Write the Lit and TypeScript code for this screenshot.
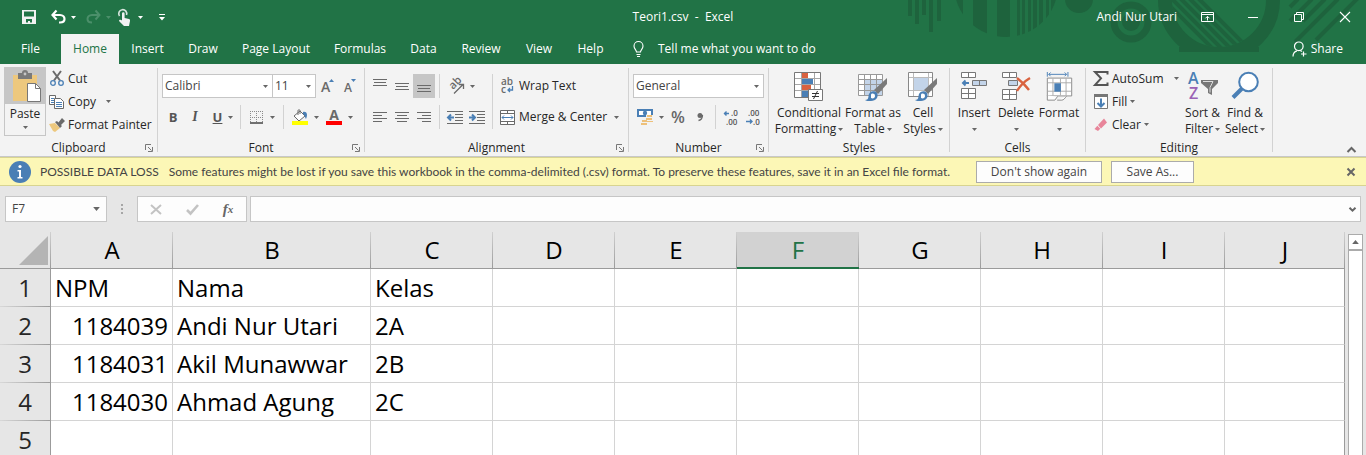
import { LitElement, html, css, svg } from "lit";
import { customElement, state } from "lit/decorators.js";
import { classMap } from "lit/directives/class-map.js";

const icon = (w: number, h: number, body: unknown) =>
  html`<svg class="ic" width=${w} height=${h} viewBox="0 0 ${w} ${h}" aria-hidden="true">${body}</svg>`;

const caret = html`<svg class="ic caret" width="5" height="3" viewBox="0 0 5 3" aria-hidden="true"><path d="M0 0h5L2.500 3z" fill="currentColor" /></svg>`;

const lines = (rows: number[][]) =>
  svg`${rows.map(([x, y, len]) => svg`<rect x=${x} y=${y} width=${len} height="1" fill="#6a6a6a" />`)}`;

const gridPaper = svg`<path d="M.5 .5h26v25h-26z" fill="#fff" stroke="#777"/><path d="M7.500 1v24M20.500 1v24M1 6.500h25M1 12.500h25M1 18.500h25" stroke="#a6a6a6" fill="none"/>`;

const brush = svg`<path d="M29 6v6l-9 10-4-4z" fill="#7a7a7a"/><path d="M7 28c4 0 3-3 4-6 1-3 6-4 8-1 2 4-1 8-6 8-3 0-5 0-6-1z" fill="#4a7fb5"/><path d="M13 23c0-2 4-2 4 1 0 2-2 3-4 2z" fill="#fff"/>`;

const I = {
  save: icon(14, 14, svg`<path d="M0 0h14v14H0z" fill="#f2f2f2"/><path d="M2 1.500h10v5H2zM4 9h6v3.500H8V11H6v1.500H4z" fill="#217346"/>`),
  undo: icon(15, 14, svg`<path d="M1 5h8c3 0 4.500 2 4.500 4S12 12.500 9 12.500H8M5.500 .500L1.500 5l4 4.500" fill="none" stroke="#fff" stroke-width="2.200"/>`),
  redo: icon(15, 14, svg`<path d="M14 5H6C3 5 1.500 7 1.500 9S3 12.500 6 12.500M9.500 .500l4 4.500-4 4.500" fill="none" stroke="#4b8f6a" stroke-width="2"/>`),
  touch: icon(13, 17, svg`<path d="M1.500 7A4 4 0 1 1 8.500 6" fill="none" stroke="#d9e6df" stroke-width="1.600"/><path d="M4 4.500a1.300 1.300 0 0 1 2.600 0V9l4.400 1c1 .300 1 1 1 2l-1 5H6L1 12c0-1.500 2-1.500 3-.500z" fill="#f2f2f2"/>`),
  customize: icon(6, 7, svg`<path d="M0 0h6v1H0zM0 3h6L3 6.500z" fill="#fff"/>`),
  display: icon(13, 10, svg`<path d="M.5 .5h12v9H.5zM.5 2.500h12M6.500 8.500v-4M4.500 6.300l2-2 2 2" fill="none" stroke="#fff"/>`),
  min: icon(10, 10, svg`<path d="M0 5.500h10" stroke="#fff"/>`),
  restore: icon(10, 10, svg`<path d="M.5 2.500h7v7h-7zM2.500 2.500v-2h7v7h-2" fill="none" stroke="#fff"/>`),
  close: icon(10, 10, svg`<path d="M0 0l10 10M10 0L0 10" stroke="#fff" stroke-width="1.100"/>`),
  bulb: icon(11, 16, svg`<path d="M3.500 11c0-2-2.500-3-2.500-6a4.500 4.500 0 0 1 9 0c0 3-2.500 4-2.500 6zM3.500 13.500h4M4 15.500h3" fill="none" stroke="#fff" stroke-width="1.100"/>`),
  share: icon(15, 16, svg`<path d="M1 15.500c0-3 1.500-5 4-5.700M10 10.500c-.500-.400-1-.600-1.800-.800M11.500 10.500v5M9 13h5.500" fill="none" stroke="#fff" stroke-width="1.200"/><circle cx="6.800" cy="5.300" r="4.300" fill="none" stroke="#fff" stroke-width="1.200"/>`),
  paste: icon(30, 32, svg`<path d="M1 4h24v26H1z" fill="#edc87e"/><path d="M6 2h4a3 3 0 0 1 6 0h4v6H6z" fill="#7a7a7a"/><circle cx="13" cy="3" r="1.400" fill="#c6c6c6"/><path d="M15.500 12.500h8l5 5v13h-13z" fill="#fff" stroke="#777"/><path d="M23.500 12.500v5h5" fill="none" stroke="#777"/>`),
  cut: icon(14, 15, svg`<path d="M3 0l7 9.500M11 0L4 9.500" stroke="#6a6a6a" stroke-width="2"/><circle cx="3" cy="12" r="2.300" fill="none" stroke="#4a7fb5" stroke-width="1.300"/><circle cx="11" cy="12" r="2.300" fill="none" stroke="#4a7fb5" stroke-width="1.300"/>`),
  copy: icon(16, 14, svg`<path d="M.5 .5h6v9h-6z" fill="#fff" stroke="#6a6a6a"/><path d="M2 3.500h3M2 5.500h3M2 7.500h3" stroke="#4a7fb5"/><path d="M5.500 3.500h6l3 3v7h-9z" fill="#fff" stroke="#6a6a6a"/><path d="M7 7.500h6M7 9.500h6M7 11.500h6" stroke="#4a7fb5"/>`),
  painter: icon(16, 14, svg`<path d="M0 6l6-1 5 5-5 4-2-1z" fill="#edc87e"/><path d="M6 4l2-1 5 5-2 2zM9 5l4-5 3 3-4 4z" fill="#6a6a6a"/>`),
  border: icon(13, 13, svg`<path d="M0 .5h13M0 6.500h13M.5 0v12M6.500 0v12M12.500 0v12" stroke="#8a8a8a" stroke-dasharray="1 1"/><path d="M0 12h13" stroke="#444" stroke-width="1.500"/>`),
  fill: icon(16, 16, svg`<path d="M2 7l6-5 5 5-6 5z" fill="#fff" stroke="#6a6a6a"/><path d="M6 6V1.500c0-1 2-1 2 0V5" fill="none" stroke="#6a6a6a"/><path d="M11 3c4-1 5 3 3 7-1-1-1-4-3-5z" fill="#4a7fb5"/><path d="M0 12h16v4H0z" fill="#ff0"/>`),
  fontColor: icon(16, 16, svg`<text x="8" y="11" text-anchor="middle" font-size="14" font-weight="700" fill="#6a6a6a">A</text><path d="M0 12h16v4H0z" fill="#f00"/>`),
  grow: icon(13, 15, svg`<text x="0" y="13" font-size="14" font-weight="600" fill="#6a6a6a">A</text><path d="M8 3h5l-2.500-3z" fill="#4a7fb5"/>`),
  shrink: icon(13, 15, svg`<text x="1" y="13" font-size="12" font-weight="600" fill="#6a6a6a">A</text><path d="M8 0h5l-2.500 3z" fill="#4a7fb5"/>`),
  top: icon(14, 14, lines([[0, 0, 14], [1, 3, 12], [0, 6, 14]])),
  middle: icon(14, 14, lines([[0, 4, 14], [1, 7, 12], [0, 10, 14]])),
  bottom: icon(14, 14, lines([[0, 6, 14], [1, 9, 12], [0, 12, 14]])),
  left: icon(14, 11, lines([[0, 0, 14], [0, 3, 9], [0, 6, 14], [0, 9, 9]])),
  center: icon(14, 11, lines([[0, 0, 14], [2, 3, 10], [0, 6, 14], [2, 9, 10]])),
  right: icon(14, 11, lines([[0, 0, 14], [5, 3, 9], [0, 6, 14], [5, 9, 9]])),
  orient: icon(16, 16, svg`<text transform="translate(5 12) rotate(-45)" font-size="11" font-weight="600" fill="#6a6a6a">ab</text><path d="M6 15.500l9-9M15.500 11V6.500H11" fill="none" stroke="#6a6a6a" stroke-width="1.300"/>`),
  outdent: icon(16, 13, svg`${lines([[0, 0, 16], [8, 3, 8], [8, 6, 8], [8, 9, 8], [0, 12, 16]])}<path d="M1 6.500h6M4 3.500l-3 3 3 3" fill="none" stroke="#4a7fb5" stroke-width="2"/>`),
  indent: icon(16, 13, svg`${lines([[0, 0, 16], [8, 3, 8], [8, 6, 8], [8, 9, 8], [0, 12, 16]])}<path d="M0 6.500h6M3 3.500l3 3-3 3" fill="none" stroke="#4a7fb5" stroke-width="2"/>`),
  wrap: icon(15, 16, svg`<text x="1" y="7" font-size="10" font-weight="600" fill="#6a6a6a">ab</text><text x="1" y="15" font-size="10" font-weight="600" fill="#6a6a6a">c</text><path d="M12.500 8v4H8M10 10l-2 2 2 2" fill="none" stroke="#4a7fb5" stroke-width="1.300"/>`),
  merge: icon(15, 15, svg`<path d="M.5 .5h14v14H.5zM.5 3.500h14M.5 11.500h14M7.500 .5v3M7.500 11.500v3" fill="#fff" stroke="#6a6a6a"/><path d="M2 7.500h11M4 5.500l-2 2 2 2M11 5.500l2 2-2 2" fill="none" stroke="#4a7fb5"/>`),
  money: icon(16, 16, svg`<path d="M0 0h16v8H0z" fill="#4a7fb5"/><path d="M2 2h12v4H2z" fill="#fff"/><circle cx="8" cy="4" r="2.200" fill="#4a7fb5"/><path d="M9 6h7v9H4V9h5z" fill="#f2f2f2"/><path d="M10 6h5v2h-5zM9 9h6v2H9zM10 12h6v1h-6zM5 11h5v2H5zM4 14h6v2H4z" fill="#edc07a"/>`),
  comma: icon(6, 8, svg`<circle cx="3" cy="2.500" r="2.500" fill="#6a6a6a"/><path d="M5.500 2c0 3-1.500 5-4 5.500" fill="none" stroke="#6a6a6a" stroke-width="1.300"/>`),
  incDec: icon(15, 15, svg`<text x="7" y="6" font-size="8" font-weight="600" fill="#555">.0</text><text x="2" y="15" font-size="8" font-weight="600" fill="#555">.00</text><path d="M0 3.500h5M2.500 1.500l-2 2 2 2" fill="none" stroke="#4a7fb5" stroke-width="1.400"/>`),
  decDec: icon(15, 15, svg`<text x="2" y="6" font-size="8" font-weight="600" fill="#555">.00</text><text x="7" y="15" font-size="8" font-weight="600" fill="#555">.0</text><path d="M0 11.500h6M4 9.500l2 2-2 2" fill="none" stroke="#4a7fb5" stroke-width="1.400"/>`),
  conditional: icon(30, 30, svg`${gridPaper}<path d="M8 1h6v5H8zM8 13h9v5H8z" fill="#d9623f"/><path d="M8 7h11v5H8zM8 19h6v6H8z" fill="#4a7fb5"/><path d="M14.500 17.500h14v11h-14z" fill="#fff" stroke="#777"/><path d="M18 21.500h7M18 24.500h7M23.500 19l-4 8" stroke="#333" fill="none"/>`),
  formatTable: icon(30, 30, svg`<path d="M.5 2.500h24v21H.5z" fill="#fff"/><path d="M6 8h18v15H6z" fill="#c3d4e9"/><path d="M.5 2.500h24v21H.5zM6.500 3v20M12.500 3v20M18.500 3v20M1 7.500h23M1 12.500h23M1 18.500h23" fill="none" stroke="#999"/>${brush}`),
  cellStyles: icon(30, 30, svg`<path d="M.5 .5h24v24H.5z" fill="#fff" stroke="#888"/><path d="M5.500 1v23M20.500 1v23M1 5.500h23M1 18.500h23" stroke="#bbb"/><path d="M6 6h14v12H6z" fill="#c3d4e9"/>${brush}`),
  insert: icon(28, 30, svg`<path d="M1.500 .5h14v5h-14zM8.500 .5v5M1.500 16.500h14v10h-14zM8.500 16.500v10M1.500 21.500h14" fill="#fff" stroke="#777"/><path d="M12.500 8.500h14v5h-14zM19.500 8.500v5" fill="#c3d4e9" stroke="#777"/><path d="M3 11h6M5.500 8.500L3 11l2.500 2.500" fill="none" stroke="#4a7fb5" stroke-width="2"/>`),
  del: icon(30, 30, svg`<path d="M1.500 .5h14v5h-14zM8.500 .5v5M1.500 17.500h14v10h-14zM8.500 17.500v10M1.500 22.500h14" fill="#fff" stroke="#777"/><path d="M7.500 8.500h9v5h-9z" fill="#c3d4e9" stroke="#777"/><path d="M16 6c4 3 9 8 12 12M29 6c-5 3-10 8-13 13" fill="none" stroke="#d9623f" stroke-width="2.400"/>`),
  format: icon(29, 32, svg`<path d="M1.500 0v5M23.500 0v5M3 2.500h19M5 .500l-2 2 2 2M20 .500l2 2-2 2" fill="none" stroke="#4a7fb5"/><path d="M1.500 6.500h26v19h-26z" fill="#fff" stroke="#888"/><path d="M7.500 7v18M15.500 7v18M21.500 7v18M2 11.500h25M2 20.500h25" stroke="#aaa"/><path d="M9 12h7v9H9z" fill="#4a7fb5"/><path d="M1.500 25v5h8l3-4M12 30h5c2 0 3-2 5-4" fill="#fff" stroke="#888"/>`),
  sum: icon(15, 15, svg`<path d="M14 3.500V1H1.500l6 6.300L1.500 14H14v-2.500" fill="none" stroke="#555" stroke-width="2"/>`),
  fillDown: icon(14, 15, svg`<path d="M.5 .5h13v14H.5z" fill="#fff" stroke="#777"/><path d="M0 0h14v3H0z" fill="#777"/><path d="M7 4.500v8M3.500 9L7 12.500 10.500 9" fill="none" stroke="#4a7fb5" stroke-width="2"/>`),
  clear: icon(14, 14, svg`<path d="M4 7l6-6.500 3 4-6 6z" fill="#e8859a"/><path d="M3.300 7.700l3 3L4 13l-3.500-2z" fill="#e8859a"/>`),
  sort: icon(30, 30, svg`<text x="0" y="12" font-size="16" font-weight="600" fill="#4a7fb5">A</text><text x="1" y="27" font-size="16" font-weight="600" fill="#9a62b5">Z</text><path d="M13 8h17v3l-6 6v6l-4-2v-4l-7-6z" fill="#777"/><path d="M15 9.500h10l-3 6v5" fill="none" stroke="#ddd"/>`),
  find: icon(28, 30, svg`<circle cx="17.500" cy="10" r="9.300" fill="#fff" stroke="#4a7fb5" stroke-width="2"/><path d="M11 16.500L2 25.500" stroke="#4a7fb5" stroke-width="4"/>`),
  launcher: icon(8, 8, svg`<path d="M.5 6V.5H6M3 3l3.500 3.500M7.500 3v4.500H3" fill="none" stroke="#777"/>`),
  collapse: icon(9, 6, svg`<path d="M.5 5l4-4 4 4" fill="none" stroke="#666" stroke-width="2"/>`),
  info: icon(22, 22, svg`<circle cx="11" cy="11" r="11" fill="#4a7fb5"/><circle cx="11" cy="5.500" r="1.600" fill="#fff"/><path d="M8.500 9H12v7h1.500v1.500h-5V16H10v-5.500H8.500z" fill="#fff"/>`),
  dismiss: icon(8, 8, svg`<path d="M.5 .5l7 7M7.500 .5l-7 7" stroke="#666" stroke-width="2"/>`),
  cancel: icon(12, 11, svg`<path d="M1 1l10 9M11 1L1 10" stroke="#c3c3c3" stroke-width="2"/>`),
  enter: icon(13, 11, svg`<path d="M1 6l3.500 3.500L12 1" fill="none" stroke="#c3c3c3" stroke-width="2.600"/>`),
  chevron: icon(7, 5, svg`<path d="M.5 .7l3 3 3-3" fill="none" stroke="#666" stroke-width="2"/>`),
};

const TABS: [string, number][] = [
  ["File", 61], ["Home", 58], ["Insert", 57], ["Draw", 54], ["Page Layout", 92],
  ["Formulas", 76], ["Data", 51], ["Review", 64], ["View", 52], ["Help", 51],
];
const COLUMNS = ["A", "B", "C", "D", "E", "F", "G", "H", "I", "J"];
const ROWS = [
  ["NPM", "Nama", "Kelas"],
  ["1184039", "Andi Nur Utari", "2A"],
  ["1184031", "Akil Munawwar", "2B"],
  ["1184030", "Ahmad Agung", "2C"],
  [],
];

@customElement("app-root")
export class AppRoot extends LitElement {
  @state() private tab = "Home";

  static styles = css`
    :host { display: flex; flex-direction: column; height: 100vh; overflow: hidden; background: #e6e6e6; font: 12px/16px "Open Sans", "Noto Sans", sans-serif; color: #262626; }
    *, *::before, *::after { box-sizing: border-box; }
    button, input, select { font: inherit; color: inherit; margin: 0; padding: 0; border: 0; background: none; border-radius: 0; outline: none; appearance: none; }
    button { display: flex; align-items: center; justify-content: center; white-space: nowrap; }
    .ic { display: block; flex: none; overflow: visible; }
    .caret { color: #666; }
    .top { position: relative; flex: none; background: #217346; color: #fff; }
    .art { position: absolute; top: 0; right: 0; }
    .title { position: relative; display: grid; grid-template-columns: 1fr auto 1fr; height: 34px; align-items: center; }
    .quick { display: flex; align-items: center; padding-left: 22px; }
    .quick .caret { color: #fff; }
    .quick .off .caret { color: #4b8f6a; }
    .pair { gap: 5px; }
    .q1 { margin-left: 15px; }
    .q2 { margin-left: 10px; }
    .q3 { margin-left: 7px; gap: 7px; }
    .q4 { margin-left: 16px; }
    .account { display: flex; justify-content: flex-end; align-items: center; padding-right: 16px; }
    .window { width: 46px; height: 30px; }
    .window:last-child { width: 28px; justify-content: flex-end; }
    .name { margin-right: 7px; }
    .tabs { position: relative; display: flex; height: 30px; }
    .tab { height: 30px; flex: none; }
    .tab.on { background: #f3f3f3; color: #217346; }
    .tell { gap: 14px; margin-left: 17px; }
    .share { gap: 4px; margin-left: auto; padding-right: 23px; }
    .ribbon { flex: none; display: grid; grid-template-columns: 158px 207px 264px 140px 181px 136px 187px 1fr; height: 93px; background: #f3f3f3; border-bottom: 1px solid #c8c8c8; }
    .group { display: grid; grid-template-rows: 72px 17px; padding-top: 3px; background: linear-gradient(#d2d2d2, #d2d2d2) right 4px / 1px 84px no-repeat; }
    .last { background: none; align-items: end; justify-items: end; padding: 0 10px 1px 0; }
    .foot { display: grid; grid-template-columns: 16px 1fr 16px; align-items: center; padding-right: 1px; text-align: center; }
    .foot span { grid-column: 2; }
    .foot button { height: 12px; }
    .body { display: flex; }
    .stack { display: grid; grid-template-rows: 23px 23px 23px; justify-items: start; align-content: start; }
    .line { gap: 3px; height: 23px; }
    .line .ic:first-child { width: 16px; }
    .far .caret { margin-left: 7px; }
    .clip { padding-left: 4px; gap: 3px; }
    .paste { flex-direction: column; justify-content: flex-start; width: 42px; height: 69px; border: 1px solid #c6c6c6; background: linear-gradient(#c6c6c6, #c6c6c6) top / 100% 36px no-repeat; }
    .paste .ic { margin: 3px 0 0 4px; }
    .paste .word { margin-top: 3px; }
    .paste .caret { margin: 4px 0 0; }
    .two { display: grid; grid-template-rows: 24px 24px; row-gap: 7px; align-content: start; padding: 7px 0 0 4px; }
    .row { display: flex; align-items: center; }
    .pick { display: grid; align-items: center; height: 24px; border: 1px solid #c6c6c6; background: #fff; }
    .pick > * { grid-area: 1 / 1; }
    .pick select { padding-left: 2px; width: 100%; color: #444; }
    .pick .caret { justify-self: end; margin-right: 4px; pointer-events: none; }
    .w-font { width: 111px; }
    .w-size { width: 44px; margin-left: -1px; }
    .w-number { width: 131px; }
    .b22 { width: 22px; height: 24px; flex: none; }
    .b34 { width: 34px; height: 24px; flex: none; gap: 6px; }
    .b42 { width: 42px; height: 24px; flex: none; gap: 7px; }
    .on22 { background: #c6c6c6; }
    .rule { width: 1px; height: 24px; background: #d2d2d2; flex: none; }
    .air { margin: 0 4px; }
    .after { margin-right: 4px; }
    .bold { font-weight: 700; font-size: 13px; color: #555; }
    .ital { font: italic 700 14px/16px "Liberation Serif", serif; color: #555; }
    .under { font-weight: 700; font-size: 13px; color: #555; text-decoration: underline; }
    .align { display: grid; grid-template-columns: 127px 1fr; }
    .wide { border-left: 1px solid #d2d2d2; display: grid; grid-template-rows: 24px 24px; row-gap: 7px; margin-top: 7px; padding-left: 7px; justify-items: start; height: 55px; }
    .merge { gap: 4px; height: 24px; }
    .pct { font-size: 16px; font-weight: 600; color: #666; }
    .big { display: flex; flex-direction: column; justify-content: flex-start; line-height: 16px; padding-top: 5px; }
    .big .ic { height: 30px; }
    .big .word { margin-top: 3px; }
    .big .sub { display: flex; align-items: center; justify-content: center; gap: 2px; height: 16px; }
    .big .caret, .paste .caret { height: 3px; }
    .styles { display: grid; grid-template-columns: 72px 56px 44px; padding-left: 4px; }
    .cells { display: grid; grid-template-columns: 42px 42px 44px; padding-left: 3px; }
    .edit { display: grid; grid-template-columns: 88px 43px 42px; padding-left: 7px; }
    .notice { flex: none; display: flex; align-items: center; height: 29px; padding: 0 11px 0 9px; background: #fcf7b6; border: solid #d8d490; border-width: 1px 0; color: #444; white-space: nowrap; font-family: Lato, sans-serif; }
    .notice b { font-weight: 400; margin: 0 10px 0 9px; }
    .notice .act { height: 22px; border: 1px solid #ababab; background: #fdfdfd; font-family: "Open Sans", sans-serif; }
    .act1 { width: 126px; margin-left: auto; }
    .act2 { width: 83px; margin: 0 153px 0 9px; }
    .formula { flex: none; display: flex; align-items: center; height: 46px; padding: 0 5px; }
    .field { height: 26px; border: 1px solid #c6c6c6; background: #fdfdfd; display: flex; align-items: center; }
    .ref { width: 102px; padding: 0 6px; }
    .ref input { flex: 1; min-width: 0; color: #444; }
    .ref .caret { width: 7px; height: 4px; }
    .dots { width: 30px; display: grid; justify-content: center; }
    .acts { width: 110px; }
    .acts button { flex: 1; }
    .fx { font: italic 700 15px/20px "Liberation Serif", serif; color: #666; }
    .fx small { font-size: 11px; }
    .entry { flex: 1; margin-left: 3px; padding-right: 4px; }
    .entry input { flex: 1; min-width: 0; }
    .sheet { flex: 1; min-height: 0; display: grid; grid-template-columns: 1fr 21px; overflow: hidden; }
    table { width: 100%; table-layout: fixed; border-collapse: separate; border-spacing: 0; background: #fff; font-size: 24px; line-height: 32px; color: #000; align-self: start; }
    .c0 { width: 51px; }
    .c1 { width: 122px; }
    .c2 { width: 198px; }
    th { font-weight: 400; padding: 0; background: #e6e6e6; }
    thead th { height: 37px; border-bottom: 1px solid #9b9b9b; background: linear-gradient(#d0d0d0, #9b9b9b) right / 1px 100% no-repeat #e6e6e6; }
    thead .hot { background-color: #d2d2d2; color: #217346; border-bottom: 2px solid #217346; }
    thead th:first-child svg { margin: 0 3px 0 auto; }
    tbody th { height: 38px; border-right: 1px solid #9b9b9b; background: linear-gradient(90deg, #d8d8d8, #9b9b9b) bottom / 100% 1px no-repeat #e6e6e6; color: #262626; }
    td { height: 38px; padding: 0 4px; border: solid #d4d4d4; border-width: 0 1px 1px 0; white-space: nowrap; }
    td:last-child { border-right-color: #9b9b9b; }
    .num { text-align: right; }
    .scroll { display: flex; flex-direction: column; padding: 2px 3px 0; }
    .scroll button { height: 16px; border: 1px solid #ababab; background: #fff; }
    .scroll .caret { transform: rotate(180deg); width: 7px; height: 4px; }
    .thumb { flex: 1; border: 1px solid #ababab; border-bottom: 0; background: #fff; }
  `;

  private foot(label: string, launcher = false) {
    return html`<div class="foot"><span>${label}</span>${launcher ? html`<button aria-label="${label} settings">${I.launcher}</button>` : ""}</div>`;
  }

  private big(pic: unknown, first: string, second = "") {
    return html`<button class="big">${pic}<span class="word">${first}</span><span class="sub">${second}${caret}</span></button>`;
  }

  private art() {
    const c = "#1e633d";
    return html`<svg class="art" width="466" height="64" viewBox="900 0 466 64" aria-hidden="true">
      <defs>
        <clipPath id="disc"><circle cx="1006" cy="-15" r="52" /></clipPath>
        <clipPath id="hole"><circle cx="1219" cy="0" r="47" /></clipPath>
        <clipPath id="band"><path d="M1150 0h140v52h-140z" /></clipPath>
      </defs>
      <path fill=${c} d="M908 0h4v16h-4zM915 0h4v24h-4zM922 0h4v15h-4zM929 0h4v32h-4zM937 0h4v21h-4z" />
      <path clip-path="url(#disc)" fill=${c} d="M950 0h13v20h-13zM973 0h14v40h-14zM997 0h13v40h-13zM1017 0h3v40h-3zM1022 0h3v40h-3zM1028 0h3v40h-3zM1033 0h4v40h-4zM1039 0h4v40h-4zM1046 0h3v40h-3zM1051 0h8v40h-8z" />
      <circle cx="1079" cy="-1" r="14" fill=${c} />
      <circle cx="1131" cy="22" r="17" fill="none" stroke=${c} stroke-width="7" />
      <circle cx="1131" cy="22" r="9" fill=${c} />
      <circle cx="1219" cy="0" r="54" fill="none" stroke=${c} stroke-width="14" clip-path="url(#band)" />
      <path d="M1179 47h80v5h-80z" fill=${c} />
      <path clip-path="url(#hole)" stroke=${c} stroke-width="4" fill="none" d="M1160 -4l60 60M1169 -4l60 60M1178 -4l60 60M1187 -4l60 60M1196 -4l60 60" />
      <path stroke=${c} stroke-width="4" fill="none" d="M1290 7l8-8M1290 21l22-22M1303 21l22-22M1295 42l43-43M1316 40l42-42" />
    </svg>`;
  }

  render() {
    return html`
      <header class="top">
        ${this.art()}
        <div class="title">
          <div class="quick">
            <button aria-label="Save">${I.save}</button>
            <button class="pair q1" aria-label="Undo">${I.undo}${caret}</button>
            <button class="pair q2 off" aria-label="Redo" disabled>${I.redo}${caret}</button>
            <button class="pair q3" aria-label="Touch mode">${I.touch}${caret}</button>
            <button class="q4" aria-label="Customize toolbar">${I.customize}</button>
          </div>
          <div>Teori1.csv&nbsp; -&nbsp; Excel</div>
          <div class="account">
            <span class="name">Andi Nur Utari</span>
            <button class="window" aria-label="Ribbon display">${I.display}</button>
            <button class="window" aria-label="Minimize">${I.min}</button>
            <button class="window" aria-label="Restore">${I.restore}</button>
            <button class="window" aria-label="Close">${I.close}</button>
          </div>
        </div>
        <nav class="tabs">
          ${TABS.map(([name, width]) => html`<button class=${classMap({ tab: true, on: name === this.tab })} style="width:${width}px" @click=${() => (this.tab = name)}>${name}</button>`)}
          <button class="tell">${I.bulb}Tell me what you want to do</button>
          <button class="share">${I.share}Share</button>
        </nav>
      </header>

      <section class="ribbon">
        <div class="group">
          <div class="body clip">
            <button class="paste">${I.paste}<span class="word">Paste</span>${caret}</button>
            <div class="stack">
              <button class="line">${I.cut}Cut</button>
              <button class="line far">${I.copy}Copy${caret}</button>
              <button class="line">${I.painter}Format Painter</button>
            </div>
          </div>
          ${this.foot("Clipboard", true)}
        </div>
        <div class="group">
          <div class="two">
            <div class="row">
              <label class="pick w-font"><select aria-label="Font"><option>Calibri</option></select>${caret}</label>
              <label class="pick w-size"><select aria-label="Font size"><option>11</option></select>${caret}</label>
              <button class="b22" aria-label="Increase font size">${I.grow}</button>
              <button class="b22" aria-label="Decrease font size">${I.shrink}</button>
            </div>
            <div class="row">
              <button class="b22 bold">B</button>
              <button class="b22 ital">I</button>
              <button class="b34" aria-label="Underline"><span class="under">U</span>${caret}</button>
              <span class="rule"></span>
              <button class="b42" aria-label="Borders">${I.border}${caret}</button>
              <span class="rule after"></span>
              <button class="b34" aria-label="Fill colour">${I.fill}${caret}</button>
              <button class="b34" aria-label="Font colour">${I.fontColor}${caret}</button>
            </div>
          </div>
          ${this.foot("Font", true)}
        </div>
        <div class="group">
          <div class="align">
            <div class="two">
              <div class="row">
                <button class="b22" aria-label="Top align">${I.top}</button>
                <button class="b22" aria-label="Middle align">${I.middle}</button>
                <button class="b22 on22" aria-label="Bottom align">${I.bottom}</button>
                <span class="rule air"></span>
                <button class="b34" aria-label="Orientation">${I.orient}${caret}</button>
              </div>
              <div class="row">
                <button class="b22" aria-label="Align left">${I.left}</button>
                <button class="b22" aria-label="Center">${I.center}</button>
                <button class="b22" aria-label="Align right">${I.right}</button>
                <span class="rule air"></span>
                <button class="b22" aria-label="Decrease indent">${I.outdent}</button>
                <button class="b22" aria-label="Increase indent">${I.indent}</button>
              </div>
            </div>
            <div class="wide">
              <button class="merge">${I.wrap}Wrap Text</button>
              <button class="merge">${I.merge}Merge &amp; Center&nbsp;${caret}</button>
            </div>
          </div>
          ${this.foot("Alignment", true)}
        </div>
        <div class="group">
          <div class="two">
            <div class="row"><label class="pick w-number"><select aria-label="Number format"><option>General</option></select>${caret}</label></div>
            <div class="row">
              <button class="b34" aria-label="Accounting format">${I.money}${caret}</button>
              <button class="b22 pct">%</button>
              <button class="b22" aria-label="Comma style">${I.comma}</button>
              <span class="rule air"></span>
              <button class="b22" aria-label="Increase decimal">${I.incDec}</button>
              <button class="b22" aria-label="Decrease decimal">${I.decDec}</button>
            </div>
          </div>
          ${this.foot("Number", true)}
        </div>
        <div class="group">
          <div class="styles">
            ${this.big(I.conditional, "Conditional", "Formatting")}
            ${this.big(I.formatTable, "Format as", "Table")}
            ${this.big(I.cellStyles, "Cell", "Styles")}
          </div>
          ${this.foot("Styles")}
        </div>
        <div class="group">
          <div class="cells">
            ${this.big(I.insert, "Insert")}
            ${this.big(I.del, "Delete")}
            ${this.big(I.format, "Format")}
          </div>
          ${this.foot("Cells")}
        </div>
        <div class="group">
          <div class="edit">
            <div class="stack">
              <button class="line far">${I.sum}AutoSum${caret}</button>
              <button class="line">${I.fillDown}Fill${caret}</button>
              <button class="line">${I.clear}Clear${caret}</button>
            </div>
            ${this.big(I.sort, "Sort &", "Filter")}
            ${this.big(I.find, "Find &", "Select")}
          </div>
          ${this.foot("Editing")}
        </div>
        <div class="group last"><span></span><button aria-label="Collapse the ribbon">${I.collapse}</button></div>
      </section>

      <section class="notice">
        ${I.info}<b>POSSIBLE DATA LOSS</b>
        <span>Some features might be lost if you save this workbook in the comma-delimited (.csv) format. To preserve these features, save it in an Excel file format.</span>
        <button class="act act1">Don't show again</button>
        <button class="act act2">Save As...</button>
        <button aria-label="Dismiss">${I.dismiss}</button>
      </section>

      <section class="formula">
        <div class="field ref"><input aria-label="Name box" .value=${"F7"} />${caret}</div>
        <span class="dots"><svg class="ic" width="2" height="10" viewBox="0 0 2 10"><path d="M0 0h2v2H0zM0 4h2v2H0zM0 8h2v2H0z" fill="#a6a6a6" /></svg></span>
        <div class="field acts">
          <button aria-label="Cancel">${I.cancel}</button>
          <button aria-label="Enter">${I.enter}</button>
          <button class="fx" aria-label="Insert function">f<small>x</small></button>
        </div>
        <div class="field entry"><input aria-label="Formula bar" /><button aria-label="Expand">${I.chevron}</button></div>
      </section>

      <section class="sheet">
        <table>
          <colgroup>
            <col class="c0" /><col class="c1" /><col class="c2" />
            ${COLUMNS.slice(2, -1).map(() => html`<col class="c1" />`)}<col />
          </colgroup>
          <thead>
            <tr>
              <th aria-label="Select all">${icon(29, 29, svg`<path d="M29 0v29H0z" fill="#b4b4b4"/>`)}</th>
              ${COLUMNS.map((c) => html`<th scope="col" class=${classMap({ hot: c === "F" })}>${c}</th>`)}
            </tr>
          </thead>
          <tbody>
            ${ROWS.map((row, r) => html`<tr>
              <th scope="row">${r + 1}</th>
              ${COLUMNS.map((_, i) => html`<td class=${classMap({ num: r > 0 && i === 0 })}>${row[i] ?? ""}</td>`)}
            </tr>`)}
          </tbody>
        </table>
        <div class="scroll"><button aria-label="Scroll up">${caret}</button><div class="thumb"></div></div>
      </section>
    `;
  }
}
